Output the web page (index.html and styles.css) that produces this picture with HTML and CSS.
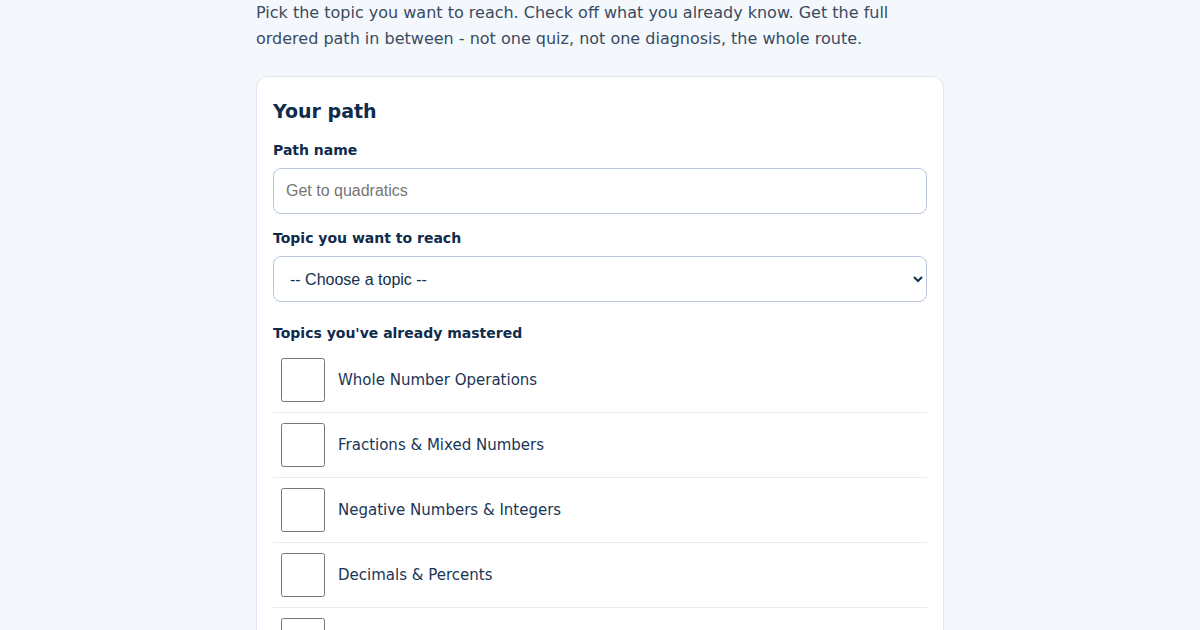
FILE: index.html
```html
<!DOCTYPE html>
<html lang="en">
<head>
    <meta charset="UTF-8">
    <meta name="viewport" content="width=device-width, initial-scale=1.0">
    <title>Build a learning path</title>
    <link rel="stylesheet" href="styles.css">
</head>
<body>
    <main class="page">
        <p class="intro">Pick the topic you want to reach. Check off what you already know. Get the full ordered path in between - not one quiz, not one diagnosis, the whole route.</p>

        <section class="card">
            <h2 class="card-title">Your path</h2>

            <label class="field-label" for="path-name">Path name</label>
            <input type="text" id="path-name" class="field" placeholder="Get to quadratics">

            <label class="field-label" for="target-topic">Topic you want to reach</label>
            <select id="target-topic" class="field field-select">
                <option value="">-- Choose a topic --</option>
                <option>Linear Equations</option>
                <option>Quadratic Equations</option>
            </select>

            <div class="field-label mastered-label">Topics you've already mastered</div>
            <ul class="topic-list">
                <li class="topic-item">
                    <input type="checkbox" id="t1">
                    <label for="t1">Whole Number Operations</label>
                </li>
                <li class="topic-item">
                    <input type="checkbox" id="t2">
                    <label for="t2">Fractions &amp; Mixed Numbers</label>
                </li>
                <li class="topic-item">
                    <input type="checkbox" id="t3">
                    <label for="t3">Negative Numbers &amp; Integers</label>
                </li>
                <li class="topic-item">
                    <input type="checkbox" id="t4">
                    <label for="t4">Decimals &amp; Percents</label>
                </li>
                <li class="topic-item">
                    <input type="checkbox" id="t5">
                    <label for="t5">Ratios &amp; Proportions</label>
                </li>
                <li class="topic-item">
                    <input type="checkbox" id="t6">
                    <label for="t6">Exponents &amp; Roots</label>
                </li>
            </ul>
        </section>
    </main>
</body>
</html>
```

FILE: styles.css
```css
* {
    margin: 0;
    padding: 0;
    box-sizing: border-box;
}

body {
    background-color: #f4f8fd;
    color: #12304f;
    font-family: 'DejaVu Sans', Verdana, sans-serif;
    line-height: 1.6;
}

.page {
    width: 688px;
    margin: 0 auto;
}

.intro {
    font-size: 16px;
    color: #3a4a5f;
    margin-bottom: 25px;
}

.card {
    background-color: #fff;
    border: 1px solid #dde6f2;
    border-radius: 12px;
    padding: 19px 16px 20px;
}

.card-title {
    font-size: 19px;
    font-weight: bold;
    color: #0f2b4c;
    margin-bottom: 12px;
}

.field-label {
    display: block;
    font-size: 14px;
    font-weight: bold;
    color: #0f2b4c;
    margin-bottom: 7px;
}

.field {
    display: block;
    width: 100%;
    height: 46px;
    padding: 0 12px;
    border: 1px solid #b9c6dc;
    border-radius: 8px;
    background-color: #fff;
    font-family: 'Liberation Sans', Arial, sans-serif;
    font-size: 16px;
    color: #12304f;
    margin-bottom: 13px;
}

.field::placeholder {
    color: #757575;
}

.field-select {
    margin-bottom: 20px;
}

.mastered-label {
    margin-bottom: 3px;
}

.topic-list {
    list-style: none;
}

.topic-item {
    display: flex;
    align-items: center;
    gap: 13px;
    padding: 10px 8px;
    border-bottom: 1px solid #e6ecf6;
}

.topic-item input {
    width: 44px;
    height: 44px;
    margin: 0;
    flex-shrink: 0;
}

.topic-item label {
    font-size: 15px;
    color: #1a3556;
}
```
